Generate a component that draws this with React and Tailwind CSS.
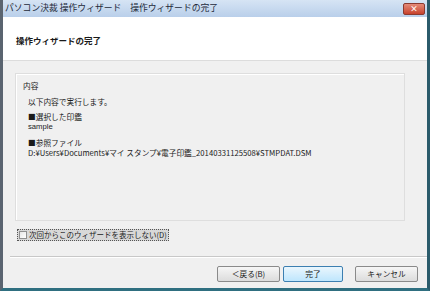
import React from "react";

const App = () => {
  return (
    <div
      className="w-[430px] h-[291px] flex flex-col bg-[#f0f0f0] border-l-[3px] border-l-[#5a6470] border-r-[3px] border-r-[#2b5b6b] border-b-[3px] border-b-[#2f6f80] overflow-hidden text-[#1a1a1a]"
      style={{ fontFamily: '"Noto Sans CJK JP", "Noto Sans", sans-serif' }}
    >
      {/* title bar */}
      <div className="h-[17px] flex items-center justify-between bg-gradient-to-b from-[#d6e4f4] to-[#b9cfea] pl-[2px] pr-[2px] shrink-0">
        <span className="text-[8.8px] leading-none text-[#1e2a3a]">
          パソコン決裁 操作ウィザード　操作ウィザードの完了
        </span>
        <button className="w-[22px] h-[12px] rounded-[2px] bg-gradient-to-b from-[#e48a78] to-[#c7412c] border border-[#8a3a30] flex items-center justify-center">
          <span className="text-[8px] leading-none text-white font-bold">×</span>
        </button>
      </div>

      {/* header */}
      <div className="h-[44px] bg-white flex items-center pl-[13px] pt-[4px] border-b border-[#dcdcdc] shrink-0">
        <span className="text-[8.5px] font-bold leading-none">操作ウィザードの完了</span>
      </div>

      {/* body */}
      <div className="flex-1 flex flex-col pl-[12px] pt-[12px]">
        <div className="w-[390px] h-[148px] border border-[#dedede] shadow-[inset_1px_1px_0_#ffffff] pl-[7px] pt-[8px] flex flex-col text-[7.7px] leading-none">
          <div>内容</div>
          <div className="pl-[5px] flex flex-col">
            <div className="mt-[8px]">以下内容で実行します。</div>
            <div className="mt-[8px]">■選択した印鑑</div>
            <div className="mt-[2px]" style={{ fontFamily: '"Liberation Sans", sans-serif' }}>sample</div>
            <div className="mt-[8px]">■参照ファイル</div>
            <div className="mt-[2px]">
              D:¥Users¥Documents¥マイ スタンプ¥電子印鑑_20140331125508¥STMPDAT.DSM
            </div>
          </div>
        </div>

        <div className="mt-[8px] flex items-center pl-[2px]">
          <div className="flex items-center gap-[2px] bg-[#d8d8d8] border border-dotted border-[#555] px-[1px] h-[12px]">
            <span className="w-[8px] h-[8px] border border-[#8f8f8f] bg-gradient-to-br from-[#e6e6e6] to-[#ffffff]"></span>
            <span className="text-[7.5px] leading-none">次回からこのウィザードを表示しない(D)</span>
          </div>
        </div>

        <div className="mt-[15px] border-t border-[#c8c8c8] shadow-[0_1px_0_#ffffff] -ml-[5px]"></div>

        <div className="flex justify-end mt-[9px] pr-[9px]">
          <button className="w-[63px] h-[16px] rounded-[2px] border border-[#8a8a8a] bg-gradient-to-b from-[#f6f6f6] to-[#dcdcdc] text-[7.7px] leading-none">
            ＜戻る(B)
          </button>
          <button className="ml-[3px] w-[60px] h-[16px] rounded-[2px] border border-[#3c7fb1] bg-gradient-to-b from-[#eaf6fd] to-[#bee6fd] text-[7.7px] leading-none">
            完了
          </button>
          <button className="ml-[12px] w-[63px] h-[16px] rounded-[2px] border border-[#8a8a8a] bg-gradient-to-b from-[#f6f6f6] to-[#dcdcdc] text-[7.7px] leading-none">
            キャンセル
          </button>
        </div>
      </div>
    </div>
  );
};

export default App;
